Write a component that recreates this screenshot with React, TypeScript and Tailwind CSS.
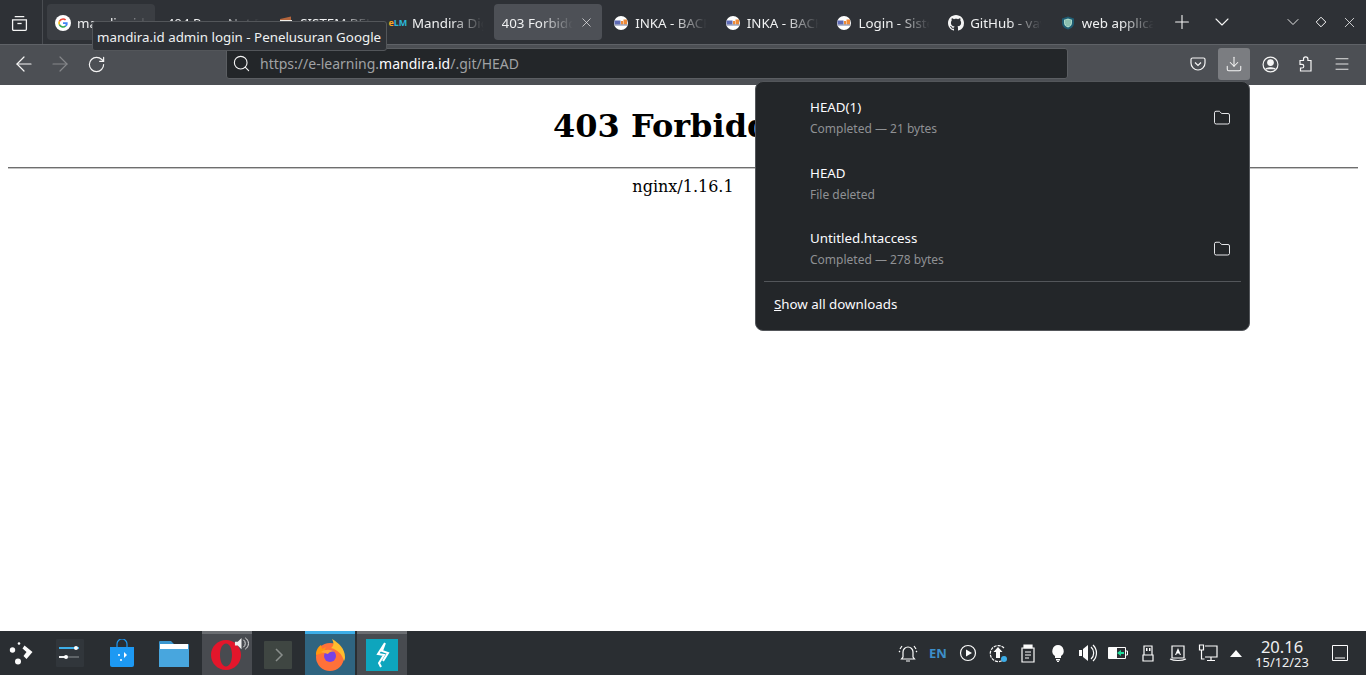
import { Plus, ChevronDown, X, ArrowLeft, ArrowRight, RotateCw, Search, Download, Menu, Folder } from "lucide-react";

const font = { fontFamily: '"Noto Sans", sans-serif' };

function GoogleIcon() {
  return (
    <svg viewBox="0 0 16 16" className="h-4 w-4 shrink-0">
      <circle cx="8" cy="8" r="8" fill="#fff" />
      <path d="M8 3.200a4.800 4.800 0 0 1 3.200 1.200L10 5.600A3.100 3.100 0 0 0 5 7L3.700 5.900A4.800 4.800 0 0 1 8 3.200z" fill="#ea4335" />
      <path d="M3.700 5.900 5 7a3.100 3.100 0 0 0 0 2l-1.300 1.100a4.800 4.800 0 0 1 0-4.200z" fill="#fbbc05" />
      <path d="M3.700 10.100 5 9a3.100 3.100 0 0 0 5 1.400l1.200 1.100a4.800 4.800 0 0 1-7.500-1.400z" fill="#34a853" />
      <path d="M12.700 7.200H8v1.900h2.700a2.400 2.400 0 0 1-.7 1.300l1.200 1.100a4.700 4.700 0 0 0 1.500-4.300z" fill="#4285f4" />
    </svg>
  );
}

function InkaIcon() {
  return (
    <svg viewBox="0 0 14 14" className="h-[14px] w-[14px] shrink-0">
      <circle cx="7" cy="7" r="7" fill="#fff" />
      <rect x="0.500" y="4.500" width="6" height="4" fill="#5f6bb5" />
      <rect x="7" y="5" width="2" height="3.500" fill="#ee8b3a" />
      <rect x="9.500" y="3.500" width="3.500" height="5" fill="#ee8b3a" />
      <rect x="1" y="8.500" width="12" height="1" fill="#6f7b9f" />
    </svg>
  );
}

function Tab({ icon, title, active, grey }: { icon?: React.ReactNode; title: React.ReactNode; active?: boolean; grey?: boolean }) {
  return (
    <div className={`flex h-9 w-[108px] shrink-0 items-center rounded-[4px] pl-2 ${active ? "bg-[#4d5056]" : grey ? "bg-[#3b3e43]" : ""}`}>
      {icon && <span className="mr-1.5 flex w-4 shrink-0 justify-center pt-[1px]">{icon}</span>}
      <span className="w-[76px] flex-1 overflow-hidden whitespace-nowrap pt-[4px] text-[13.33px] text-[#f0f1f2] [mask-image:linear-gradient(to_right,#000_50%,transparent_92%)]">
        {title}
      </span>
      {active && <X size={15} className="mr-[8px] shrink-0 text-[#f0f1f2]" strokeWidth={1.1} />}
    </div>
  );
}

function TrayIcon({ children }: { children: React.ReactNode }) {
  return (
    <svg viewBox="0 0 20 20" className="h-5 w-5" fill="none" stroke="#fcfcfc" strokeWidth="1.200">
      {children}
    </svg>
  );
}

function DownloadRow({ name, status, folder }: { name: string; status: string; folder?: boolean }) {
  return (
    <div className="flex h-[65.5px] items-center pl-[54px] pr-[18px] pt-[4px]">
      <div className="flex-1">
        <div className="text-[13.33px] leading-[18px] text-[#fbfbfe]">{name}</div>
        <div className="mt-[4px] text-[12px] leading-[18px] text-[#8f9194]">{status}</div>
      </div>
      {folder && <Folder size={18} strokeWidth={1.2} className="text-[#fbfbfe]" />}
    </div>
  );
}

export default function App() {
  return (
    <div className="relative flex h-screen w-full flex-col overflow-hidden bg-white" style={font}>
      {/* tab strip */}
      <div className="flex h-[44px] shrink-0 items-center bg-[#2e3136]">
        <div className="flex h-full w-[43px] shrink-0 items-center justify-center border-r border-[#4a4d52] pr-[4px] pt-[2px]">
          <svg viewBox="0 0 16 16" className="h-[17px] w-[17px]" fill="none" stroke="#f5f5f5" strokeWidth="1.200">
            <path d="M3.500 1.500h9M1.500 4.500h13v9a1 1 0 0 1-1 1h-11a1 1 0 0 1-1-1z" />
            <path d="M6 8h4" />
          </svg>
        </div>
        <div className="ml-[4px] flex items-center gap-[3.65px]">
          <Tab grey icon={<GoogleIcon />} title="mandira.id admin login" />
          <Tab title="404 Page Not Found" />
          <Tab
            icon={
              <svg viewBox="0 0 14 14" className="h-[14px] w-[14px]">
                <path d="M1 3 12 0.500V4H1z" fill="#b4653c" />
                <rect x="1" y="4" width="12" height="9" fill="#f1efe9" />
              </svg>
            }
            title="SISTEM BELAJAR"
          />
          <Tab
            icon={
              <span className="text-[9px] font-bold leading-none">
                <span className="text-[#f5a623]">e</span>
                <span className="text-[#2bb5d8]">LM</span>
              </span>
            }
            title="Mandira Digital"
          />
          <Tab active title="403 Forbidden" />
          <Tab icon={<InkaIcon />} title="INKA - BACKEND" />
          <Tab icon={<InkaIcon />} title="INKA - BACKEND" />
          <Tab icon={<InkaIcon />} title="Login - Sistem" />
          <Tab
            icon={
              <svg viewBox="0 0 16 16" className="h-4 w-4" fill="#f5f5f5">
                <path d="M8 0C3.580 0 0 3.580 0 8c0 3.540 2.290 6.530 5.470 7.590.4.07.55-.17.55-.38 0-.19-.01-.82-.01-1.490-2.010.37-2.530-.49-2.690-.94-.09-.23-.48-.94-.82-1.130-.28-.15-.68-.52-.01-.53.63-.01 1.080.58 1.230.82.72 1.210 1.870.87 2.330.66.07-.52.28-.87.51-1.070-1.780-.2-3.640-.89-3.640-3.950 0-.87.31-1.590.82-2.150-.08-.2-.36-1.020.08-2.120 0 0 .67-.21 2.200.82.64-.18 1.320-.27 2-.27s1.360.09 2 .27c1.530-1.040 2.200-.82 2.200-.82.44 1.100.16 1.920.08 2.120.51.56.82 1.270.82 2.150 0 3.070-1.870 3.750-3.650 3.950.29.25.54.73.54 1.480 0 1.070-.01 1.930-.01 2.200 0 .21.15.46.55.38A8.010 8.010 0 0 0 16 8c0-4.420-3.580-8-8-8z" />
              </svg>
            }
            title="GitHub - vavkamil"
          />
          <Tab
            icon={
              <svg viewBox="0 0 14 14" className="h-[14px] w-[14px]">
                <path d="M7 0.500 13 2.500V7c0 3.400-2.600 5.600-6 6.500C3.600 12.600 1 10.400 1 7V2.500z" fill="#1f5c72" />
                <path d="M7 2.500 11 3.800V7c0 2.200-1.700 3.700-4 4.400C4.700 10.700 3 9.200 3 7V3.800z" fill="#a9d8c8" />
                <path d="M4 5h6M4 7h6M5 9h4" stroke="#5d9c8c" strokeWidth="0.800" />
              </svg>
            }
            title="web application"
          />
        </div>
        <Plus size={22} strokeWidth={1.2} className="ml-[11px] text-[#f5f5f5]" />
        <ChevronDown size={24} strokeWidth={1.1} className="ml-[17px] text-[#f5f5f5]" />
        <div className="ml-auto mr-[3px] flex items-center text-[#f5f5f5]">
          <span className="flex w-[28px] justify-center"><ChevronDown size={20} strokeWidth={1.1} /></span>
          <span className="flex w-[28px] justify-center">
            <svg viewBox="0 0 12 12" className="h-[12px] w-[12px]" fill="none" stroke="currentColor" strokeWidth="1">
              <path d="M6 1.200 10.800 6 6 10.800 1.200 6z" />
            </svg>
          </span>
          <span className="flex w-[28px] justify-center"><X size={17} strokeWidth={1.1} /></span>
        </div>
      </div>

      {/* toolbar */}
      <div className="flex h-[41px] shrink-0 items-center border-t border-[#5f6267] bg-[#4c4f54] pb-[2px] pl-[6px] pr-[6px]">
        <span className="flex w-[36px] justify-center"><ArrowLeft size={24} strokeWidth={1.2} className="text-[#f5f5f5]" /></span>
        <span className="flex w-[36px] justify-center"><ArrowRight size={24} strokeWidth={1.2} className="text-[#85878a]" /></span>
        <span className="flex w-[36px] justify-center"><RotateCw size={19} strokeWidth={1.5} className="text-[#f5f5f5]" /></span>
        <div className="mb-[1px] ml-[112px] flex h-[31px] w-[842px] items-center rounded-[3px] border border-[#5b5e62] bg-[#232629] pl-[5px]">
          <Search size={19} strokeWidth={1.4} className="text-[#f5f5f5]" />
          <span className="ml-[9px] text-[14px] text-[#a0a2a4]">
            https://e-learning.<span className="text-[#fbfbfe]">mandira.id</span>/.git/HEAD
          </span>
        </div>
        <div className="ml-auto flex items-center">
          <span className="flex w-[36px] justify-center">
            <svg viewBox="0 0 16 16" className="h-4 w-4" fill="none" stroke="#f5f5f5" strokeWidth="1.200">
              <path d="M2.500 2h11A1.500 1.500 0 0 1 15 3.500V7A7 7 0 0 1 1 7V3.500A1.500 1.500 0 0 1 2.500 2z" />
              <path d="M5 6.500 8 9.500l3-3" />
            </svg>
          </span>
          <span className="flex w-[36px] justify-center">
            <span className="flex h-8 w-8 items-center justify-center rounded-[3px] bg-[#7b7d81]">
              <Download size={18} strokeWidth={1.4} className="text-[#f5f5f5]" />
            </span>
          </span>
          <span className="flex w-[36px] justify-center">
            <svg viewBox="0 0 16 16" className="h-[17px] w-[17px]" fill="none" stroke="#f5f5f5" strokeWidth="1.100">
              <circle cx="8" cy="8" r="7" />
              <circle cx="8" cy="6.200" r="2.600" fill="#f5f5f5" />
              <path d="M3.500 12.500c1-1.800 8-1.800 9 0" fill="#f5f5f5" />
            </svg>
          </span>
          <span className="flex w-[36px] justify-center">
            <svg viewBox="0 0 16 16" className="h-4 w-4" fill="none" stroke="#f5f5f5" strokeWidth="1.200">
              <path d="M2 4.500h3.500V3a2.200 2.200 0 0 1 4.400 0v1.500H13V15H2.500v-3H4a1.800 1.800 0 0 0 0-3.600H2z" />
            </svg>
          </span>
          <span className="flex w-[36px] justify-center"><Menu size={18} strokeWidth={1.2} className="text-[#f5f5f5]" /></span>
        </div>
      </div>

      {/* page */}
      <div className="flex-1 bg-white px-2 text-center text-black" style={{ fontFamily: '"DejaVu Serif", serif' }}>
        <h1 className="mt-[23px] text-[32px] font-bold leading-[37px]">403 Forbidden</h1>
        <hr className="mt-[21.500px] border-t-[1px] border-b-[1px] border-t-[#6e6e6e] border-b-[#c4c4c4]" />
        <p className="mt-[8px] text-[16px] leading-[19px]">nginx/1.16.1</p>
      </div>

      {/* taskbar */}
      <div className="flex h-[44px] shrink-0 items-center bg-[#2a2e32]">
        <div className="flex w-[44px] justify-center">
          <svg viewBox="0 0 26 26" className="h-[26px] w-[26px]" fill="#fcfcfc">
            <path d="M15.500 5.500 23.500 12l-6 7-3-3 3-4-4-3.500z" />
            <circle cx="3.500" cy="10" r="2.700" />
            <circle cx="10" cy="3.500" r="1.300" />
            <circle cx="9" cy="21.500" r="3" />
          </svg>
        </div>
        <div className="flex w-[52px] justify-center">
          <svg viewBox="0 0 28 28" className="h-7 w-7">
            <rect width="28" height="28" rx="1" fill="#31363b" />
            <path d="M3 9h20" stroke="#3daee9" strokeWidth="2" />
            <path d="M3 18h20" stroke="#5f6468" strokeWidth="2" />
            <path d="M3 18h8" stroke="#eff0f1" strokeWidth="2" />
            <circle cx="20" cy="9" r="2" fill="#fff" />
            <circle cx="10" cy="18" r="2" fill="#fff" />
          </svg>
        </div>
        <div className="flex w-[52px] justify-center">
          <svg viewBox="0 0 24 28" className="h-7 w-6">
            <path d="M7 8V5a5 5 0 0 1 10 0v3" fill="none" stroke="#1d99f3" strokeWidth="1.200" />
            <path d="M0 8h24v18a2 2 0 0 1-2 2H2a2 2 0 0 1-2-2z" fill="#1d99f3" />
            <circle cx="9" cy="16" r="1" fill="#fff" />
            <circle cx="11" cy="21" r="1" fill="#fff" />
            <path d="M14 13l3 3-3 3z" fill="#fff" />
          </svg>
        </div>
        <div className="flex w-[52px] justify-center">
          <svg viewBox="0 0 30 28" className="h-7 w-[30px]">
            <path d="M0 3a1 1 0 0 1 1-1h11l3 3h14a1 1 0 0 1 1 1v22H0z" fill="#3a96cf" />
            <rect x="1" y="5" width="28" height="5" fill="#fff" />
            <path d="M0 10h30v18H0z" fill="#48a6de" />
          </svg>
        </div>
        <div className="relative ml-[2px] flex h-full w-[50px] items-center border-t-[3px] border-[#6b6e72] bg-[#484b50] pl-[9px]">
          <svg viewBox="0 0 30 30" className="h-[30px] w-[30px]">
            <path fillRule="evenodd" d="M15 0c8.300 0 15 6.700 15 15s-6.700 15-15 15S0 23.300 0 15 6.700 0 15 0zm0 3.500c-3.600 0-6 5.100-6 11.500s2.400 11.500 6 11.500 6-5.100 6-11.500S18.600 3.500 15 3.500z" fill="#e3162b" />
          </svg>
          <svg viewBox="0 0 16 16" className="absolute right-[3px] top-[2px] h-[15px] w-[15px]" fill="#eeeeee">
            <path d="M1 6h3l4-4v12l-4-4H1z" />
            <path d="M10 4a5 5 0 0 1 0 8M12 2a7 7 0 0 1 0 12" fill="none" stroke="#eee" />
          </svg>
        </div>
        <div className="ml-[1px] flex h-full w-[50px] items-center justify-center border-t-[3px] border-[#2a2e32]">
          <svg viewBox="0 0 28 28" className="h-7 w-7">
            <rect width="28" height="28" rx="1" fill="#3f4642" />
            <path d="M12 8l6 6-6 6" fill="none" stroke="#8a8f8c" strokeWidth="1.500" />
          </svg>
        </div>
        <div className="ml-[2px] flex h-full w-[50px] items-center justify-center border-t-[3px] border-[#3daee9] bg-[#2f6480]">
          <svg viewBox="0 0 32 32" className="h-8 w-8">
            <circle cx="16" cy="18" r="14" fill="#ff7139" />
            <path d="M18 0c7 4 13 10 13 18 0 2-.5 3-1 4-2-7-6-11-13-13 3-2 3-5 1-9z" fill="#ffbd2e" />
            <path d="M2 16c0-5 2-8 5-10l1 4 4-2-3 6z" fill="#ff980e" />
            <circle cx="16" cy="17" r="6" fill="#7542e5" />
            <path d="M7 13c4-3 10-3 14 0-3-1-6 0-7 2z" fill="#ffa436" />
          </svg>
        </div>
        <div className="ml-[2px] flex h-full w-[50px] items-center justify-center border-t-[3px] border-[#6b6e72] bg-[#484b50]">
          <svg viewBox="0 0 32 32" className="h-8 w-8">
            <rect width="32" height="32" fill="#0ea5bd" />
            <path d="M19 4l-7 11 6 1-5 8 2 4M19 4l-3 8 6 2-5 8" fill="none" stroke="#fff" strokeWidth="2" />
          </svg>
        </div>

        {/* tray */}
        <div className="ml-auto flex items-center gap-[10px]">
          <TrayIcon>
            <path d="M5 14V9a5 5 0 0 1 10 0v5l1.500 2h-13zM8 18h4M2 6l2-3M18 6l-2-3M1 9l1-1M19 9l-1-1" />
          </TrayIcon>
          <span className="w-[20px] text-center text-[13px] font-bold leading-none text-[#3d8ec9]">EN</span>
          <TrayIcon>
            <circle cx="10" cy="10" r="7.500" />
            <path d="M8 6.500l6 3.500-6 3.500z" fill="#fcfcfc" stroke="none" />
          </TrayIcon>
          <TrayIcon>
            <path d="M16 5a8 8 0 1 0 1.500 9" strokeDasharray="3 1" />
            <path d="M10 4l4.500 5H12v6H8V9H5.500z" fill="#fcfcfc" stroke="none" />
            <circle cx="16" cy="16" r="3" fill="#3daee9" stroke="none" />
          </TrayIcon>
          <TrayIcon>
            <path d="M4 5h12v14H4zM7 9h6M7 12h6M7 15h4" />
            <path d="M6 2h8v3H6z" fill="#fcfcfc" />
          </TrayIcon>
          <TrayIcon>
            <path d="M10 2a6 6 0 0 1 3 11v2H7v-2A6 6 0 0 1 10 2zM8 16h4v1.500H8zM9 18h2v1H9z" fill="#fcfcfc" stroke="none" />
          </TrayIcon>
          <TrayIcon>
            <path d="M1 7h3v6H1zM5 6l5-4v16l-5-4z" fill="#fcfcfc" stroke="none" />
            <path d="M13 4a8 8 0 0 1 0 12M15 2a11 11 0 0 1 0 16" />
          </TrayIcon>
          <svg viewBox="0 0 20 12" className="h-3 w-5" fill="none" stroke="#fcfcfc" strokeWidth="1">
            <path d="M0.500 0.500h17v11h-17zM18 4h1.500v4H18" />
            <path d="M1 1h8v10H1z" fill="#fcfcfc" stroke="none" />
            <path d="M9 6l4-3v2h3v2h-3v2z" fill="#1cdc9a" stroke="none" />
          </svg>
          <TrayIcon>
            <path d="M6 3h8v9H6zM5 12h10v6H5z" />
            <path d="M8 5h1.500v3H8zM11 5h1.500v3H11z" fill="#fcfcfc" stroke="none" />
          </TrayIcon>
          <TrayIcon>
            <path d="M4 3h12v12H4zM2 16c4 2 12 2 16 0" />
            <path d="M10 5l3 7h-1.200l-.6-1.500H8.800L8.200 12H7z" fill="#fcfcfc" stroke="none" />
          </TrayIcon>
          <TrayIcon>
            <path d="M1.500 2h4v5h-4zM3.500 7v9h3M7 3h12v11H7M13 14v3M9 17.500h8" />
          </TrayIcon>
          <svg viewBox="0 0 12 7" className="ml-[2px] h-[7px] w-3" fill="#fcfcfc">
            <path d="M6 0l6 7H0z" />
          </svg>
          <div className="ml-[2px] flex w-[56px] flex-col items-center text-[#eff0f1]">
            <span className="text-[16.5px] leading-[17px]">20.16</span>
            <span className="text-[12.8px] leading-[14px]">15/12/23</span>
          </div>
          <svg viewBox="0 0 16 16" className="ml-[12px] mr-[18px] h-4 w-4" fill="none" stroke="#fcfcfc" strokeWidth="1">
            <path d="M0.500 0.500h15v15H0.500zM3 13h10" />
          </svg>
        </div>
      </div>

      {/* link tooltip */}
      <div className="absolute left-[92px] top-[21px] flex h-[30px] w-[295px] items-center whitespace-nowrap rounded-[3px] border border-[#53565a] bg-[#2e3136] px-[4px] pt-[4px] text-[13.33px] text-[#f0f1f2]">
        mandira.id admin login - Penelusuran Google
      </div>

      {/* downloads panel */}
      <div className="absolute left-[755px] top-[81px] h-[250px] w-[495px] rounded-[8px] border border-[#53565a] bg-[#232629] pt-[1.500px]">
        <DownloadRow name="HEAD(1)" status="Completed — 21 bytes" folder />
        <DownloadRow name="HEAD" status="File deleted" />
        <DownloadRow name="Untitled.htaccess" status="Completed — 278 bytes" folder />
        <div className="mx-2 mt-[0.500px] border-t border-[#53565a]" />
        <div className="pl-[18px] pt-[13px] text-[13.33px] leading-[18px] text-[#fbfbfe]">
          <span className="underline">S</span>how all downloads
        </div>
      </div>
    </div>
  );
}
